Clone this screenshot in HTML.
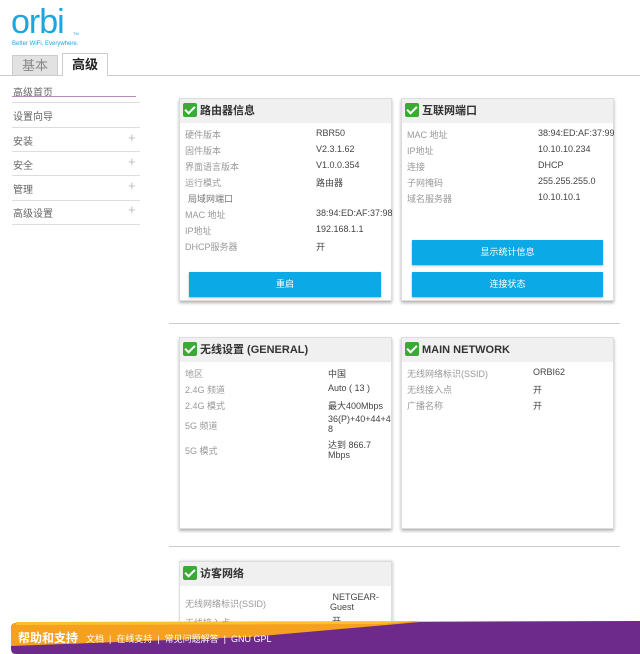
<!DOCTYPE html>
<html><head><meta charset="utf-8"><style>
*{margin:0;padding:0;box-sizing:border-box}
body{width:640px;height:654px;overflow:hidden;background:#fff;position:relative;font-family:"Liberation Sans","Noto Sans CJK SC",sans-serif;color:#555}
.a{position:absolute;white-space:nowrap}
.logo{left:11px;top:3px;font-size:34px;color:#1ba6df;letter-spacing:-1px;font-family:"Liberation Sans",sans-serif}
.tag{left:12px;top:41px;font-size:6px;color:#1ba6df}
.tab1{left:12px;top:55px;width:46px;height:20px;background:#e2e2e2;border:1px solid #ccc;border-bottom:none;font-size:13px;color:#888;text-align:center;line-height:19px}
.tab2{left:62px;top:53px;width:46px;height:23px;background:#fff;border:1px solid #ccc;border-bottom:none;font-size:13px;color:#222;font-weight:bold;text-align:center;line-height:22px}
.tline{left:0;top:75px;width:640px;height:1px;background:#ccc}
.nav{left:13px;font-size:10px;color:#666}
.nl{left:12px;width:128px;height:1px;background:#ddd}
.plus{left:128px;font-size:13px;color:#bbb;font-weight:300}
.card{background:#fff;border:1px solid #ddd;box-shadow:0 2px 3px rgba(0,0,0,.3);overflow:hidden}
.hd{height:24px;background:#f0f0f0;font-size:11px;font-weight:bold;color:#333;line-height:24px;padding-left:3px}
.ck{display:inline-block;width:14px;height:14px;background:#3aaa35;border-radius:2px;vertical-align:-3px;margin-right:3px;position:relative}
.ck:after{content:"";position:absolute;left:4px;top:1px;width:4px;height:8px;border:solid #fff;border-width:0 2px 2px 0;transform:rotate(45deg)}
.l{font-size:9px;color:#999}
.v{font-size:9px;color:#444}
.btn{background:#0baae6;color:#fff;font-size:9px;text-align:center;line-height:25px;box-shadow:0 1px 2px rgba(0,0,0,.3)}
.hr{left:169px;width:451px;height:1px;background:#ccc}
</style></head><body>
<div class="a logo">orbi</div>
<div class="a" style="left:73px;top:31px;font-size:4px;color:#1ba6df">TM</div>
<div class="a tag">Better WiFi. Everywhere.</div>
<div class="a tab1">基本</div>
<div class="a tline"></div>
<div class="a tab2">高级</div>

<div class="a nav" style="top:84px">高级首页</div>
<div class="a" style="left:12px;top:96px;width:124px;height:1px;background:#b98ab8"></div>
<div class="a nl" style="top:102px"></div>
<div class="a nav" style="top:108px">设置向导</div>
<div class="a nl" style="top:127px"></div>
<div class="a nav" style="top:133px">安装</div><div class="a plus" style="top:130px">+</div>
<div class="a nl" style="top:151px"></div>
<div class="a nav" style="top:157px">安全</div><div class="a plus" style="top:154px">+</div>
<div class="a nl" style="top:175px"></div>
<div class="a nav" style="top:181px">管理</div><div class="a plus" style="top:178px">+</div>
<div class="a nl" style="top:200px"></div>
<div class="a nav" style="top:205px">高级设置</div><div class="a plus" style="top:202px">+</div>
<div class="a nl" style="top:224px"></div>

<!-- card1 -->
<div class="a card" style="left:179px;top:98px;width:213px;height:203px"><div class="hd"><span class="ck"></span>路由器信息</div></div>
<div class="a l" style="left:185px;top:128px">硬件版本</div><div class="a v" style="left:316px;top:128px">RBR50</div>
<div class="a l" style="left:185px;top:144px">固件版本</div><div class="a v" style="left:316px;top:144px">V2.3.1.62</div>
<div class="a l" style="left:185px;top:160px">界面语言版本</div><div class="a v" style="left:316px;top:160px">V1.0.0.354</div>
<div class="a l" style="left:185px;top:176px">运行模式</div><div class="a v" style="left:316px;top:176px">路由器</div>
<div class="a l" style="left:188px;top:192px;color:#777">局域网端口</div>
<div class="a l" style="left:185px;top:208px">MAC 地址</div><div class="a v" style="left:316px;top:208px">38:94:ED:AF:37:98</div>
<div class="a l" style="left:185px;top:224px">IP地址</div><div class="a v" style="left:316px;top:224px">192.168.1.1</div>
<div class="a l" style="left:185px;top:240px">DHCP服务器</div><div class="a v" style="left:316px;top:240px">开</div>
<div class="a btn" style="left:189px;top:272px;width:192px;height:25px">重启</div>

<!-- card2 -->
<div class="a card" style="left:401px;top:98px;width:213px;height:203px"><div class="hd"><span class="ck"></span>互联网端口</div></div>
<div class="a l" style="left:407px;top:128px">MAC 地址</div><div class="a v" style="left:538px;top:128px">38:94:ED:AF:37:99</div>
<div class="a l" style="left:407px;top:144px">IP地址</div><div class="a v" style="left:538px;top:144px">10.10.10.234</div>
<div class="a l" style="left:407px;top:160px">连接</div><div class="a v" style="left:538px;top:160px">DHCP</div>
<div class="a l" style="left:407px;top:176px">子网掩码</div><div class="a v" style="left:538px;top:176px">255.255.255.0</div>
<div class="a l" style="left:407px;top:192px">域名服务器</div><div class="a v" style="left:538px;top:192px">10.10.10.1</div>
<div class="a btn" style="left:412px;top:240px;width:191px;height:25px">显示统计信息</div>
<div class="a btn" style="left:412px;top:272px;width:191px;height:25px">连接状态</div>

<div class="a hr" style="top:323px"></div>

<!-- card3 -->
<div class="a card" style="left:179px;top:337px;width:213px;height:192px"><div class="hd"><span class="ck"></span>无线设置 (GENERAL)</div></div>
<div class="a l" style="left:185px;top:367px">地区</div><div class="a v" style="left:328px;top:367px">中国</div>
<div class="a l" style="left:185px;top:383px">2.4G 频道</div><div class="a v" style="left:328px;top:383px">Auto ( 13 )</div>
<div class="a l" style="left:185px;top:399px">2.4G 模式</div><div class="a v" style="left:328px;top:399px">最大400Mbps</div>
<div class="a l" style="left:185px;top:419px">5G 频道</div><div class="a v" style="left:328px;top:414px;line-height:10px">36(P)+40+44+4<br>8</div>
<div class="a l" style="left:185px;top:444px">5G 模式</div><div class="a v" style="left:328px;top:440px;line-height:10px">达到 866.7<br>Mbps</div>

<!-- card4 -->
<div class="a card" style="left:401px;top:337px;width:213px;height:192px"><div class="hd"><span class="ck"></span>MAIN NETWORK</div></div>
<div class="a l" style="left:407px;top:367px">无线网络标识(SSID)</div><div class="a v" style="left:533px;top:367px">ORBI62</div>
<div class="a l" style="left:407px;top:383px">无线接入点</div><div class="a v" style="left:533px;top:383px">开</div>
<div class="a l" style="left:407px;top:399px">广播名称</div><div class="a v" style="left:533px;top:399px">开</div>

<div class="a hr" style="top:546px"></div>

<!-- card5 -->
<div class="a card" style="left:179px;top:561px;width:213px;height:93px;box-shadow:1px 0 3px rgba(0,0,0,.2)"><div class="hd"><span class="ck"></span>访客网络</div></div>
<div class="a l" style="left:185px;top:597px">无线网络标识(SSID)</div><div class="a v" style="left:330px;top:592px;line-height:10px">&nbsp;NETGEAR-<br>Guest</div>
<div class="a l" style="left:185px;top:616px">无线接入点</div><div class="a v" style="left:332px;top:614px">开</div>

<!-- footer -->
<svg class="a" style="left:0;top:620px" width="640" height="34">
<path d="M16,3 L640,1 L640,34 L16,34 Q11,34 11,29 L11,8 Q11,3 16,3Z" fill="#6d2a8a"/>
<path d="M16,3 L420,2 L250,17 L11,26 L11,8 Q11,3 16,3Z" fill="#f5a01e"/>
<path d="M16,2 L420,1 L380,4 L16,5Z" fill="#fbc02d"/>
</svg>
<div class="a" style="left:18px;top:629px;font-size:12px;font-weight:bold;color:#fff">帮助和支持</div>
<div class="a" style="left:86px;top:632px;font-size:9px;color:#fff">文档 &nbsp;|&nbsp; 在线支持 &nbsp;|&nbsp; 常见问题解答 &nbsp;|&nbsp; GNU GPL</div>
</body></html>
